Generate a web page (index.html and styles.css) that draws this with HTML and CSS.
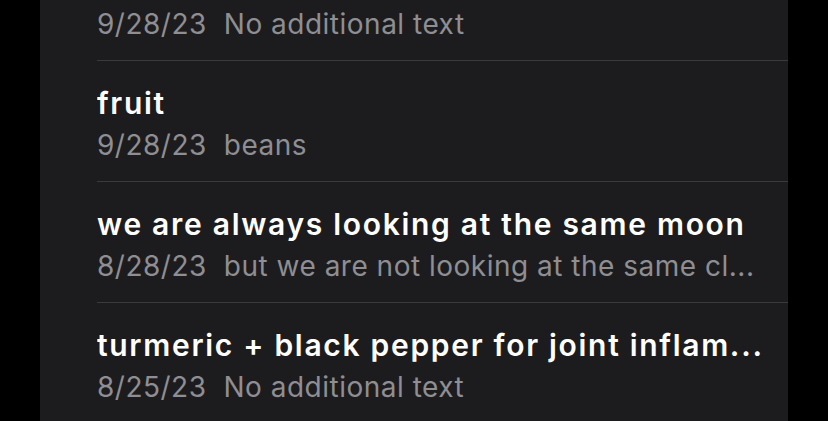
FILE: index.html
```html
<!DOCTYPE html>
<html>
<head>
<meta charset="utf-8">
<link rel="stylesheet" href="styles.css">
</head>
<body>
<div class="card">
  <div class="row">
    <div class="title"></div>
    <div class="sub"><span class="date">9/28/23</span>No additional text</div>
  </div>
  <div class="row">
    <div class="title">fruit</div>
    <div class="sub"><span class="date">9/28/23</span>beans</div>
  </div>
  <div class="row">
    <div class="title">we are always looking at the same moon</div>
    <div class="sub"><span class="date">8/28/23</span>but we are not looking at the same cl...</div>
  </div>
  <div class="row">
    <div class="title">turmeric + black pepper for joint inflam...</div>
    <div class="sub"><span class="date">8/25/23</span>No additional text</div>
  </div>
</div>
</body>
</html>
```

FILE: styles.css
```css
html, body {
  margin: 0;
  padding: 0;
  background: #000;
  height: 421px;
  overflow: hidden;
}
.card {
  margin: -60px 40px 0 40px;
  background: #1c1c1e;
  padding-left: 57px;
  min-height: 600px;
  font-family: Inter, "Noto Sans", sans-serif;
}
.row {
  padding-top: 21px;
  height: 99px;
  border-bottom: 1px solid #3a3a3d;
  white-space: nowrap;
  overflow: hidden;
}
.title {
  color: #fff;
  font-size: 30px;
  font-weight: 600;
  letter-spacing: 1.7px;
  line-height: 42px;
  height: 42px;
}
.sub {
  color: #8e8e93;
  font-size: 28px;
  letter-spacing: 0.5px;
  line-height: 42px;
}
.date {
  margin-right: 17px;
}
```
